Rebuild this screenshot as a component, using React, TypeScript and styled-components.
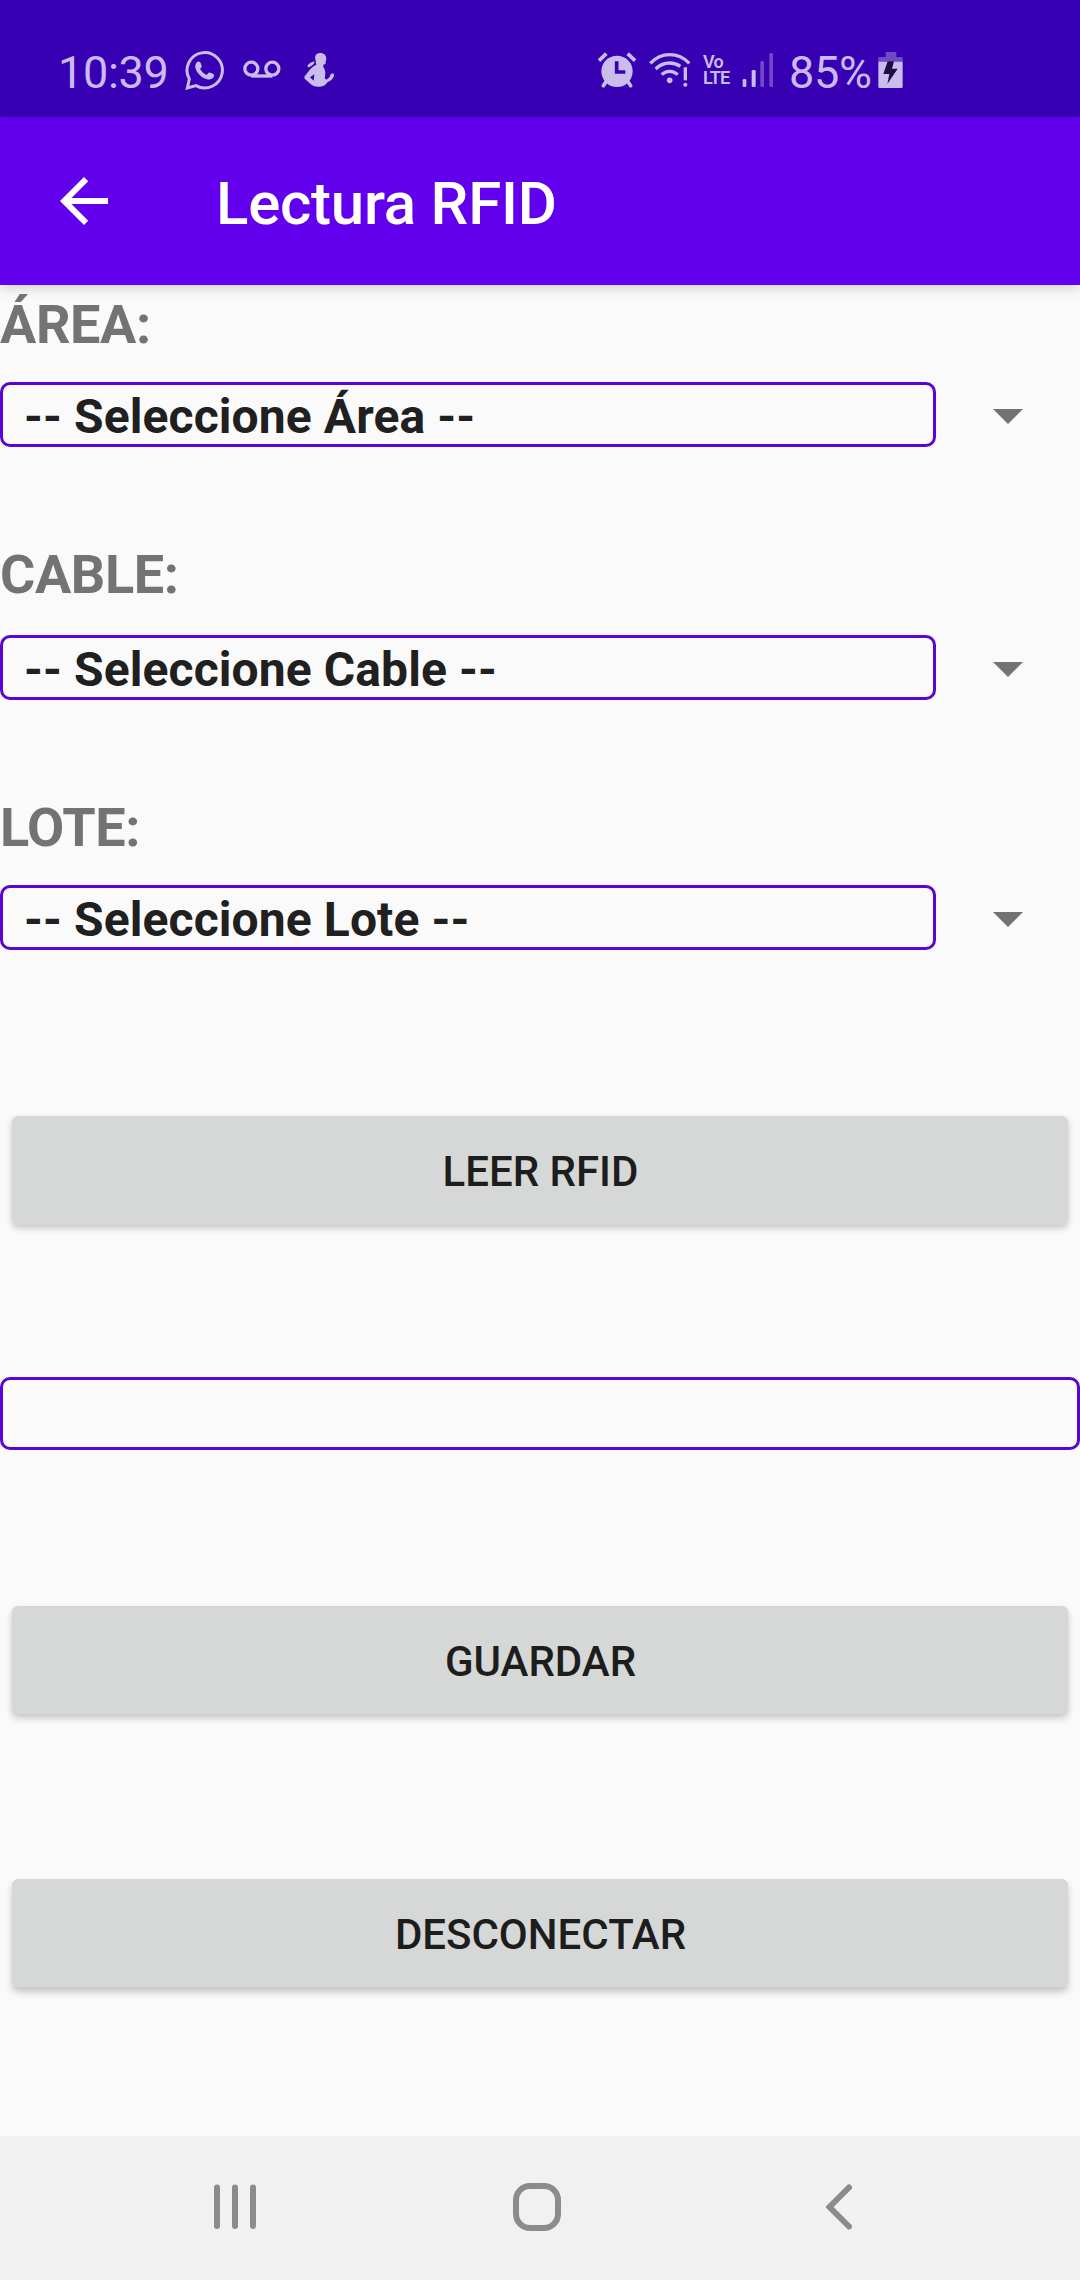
import React from "react";
import styled, { createGlobalStyle } from "styled-components";

const ICON = "#cbbdeb";
const DIM = "#7148c6";
const OUTLINE = "#5a05d2";

const GlobalStyle = createGlobalStyle`
  *, *::before, *::after { box-sizing: border-box; }
  body {
    margin: 0;
    background: #fafafa;
    font-family: Roboto, "Noto Sans", sans-serif;
  }
`;

const Screen = styled.div`
  display: flex;
  flex-direction: column;
  width: 1080px;
  height: 2280px;
  overflow: hidden;
  background: #fafafa;
`;

const StatusBar = styled.div`
  display: flex;
  justify-content: space-between;
  flex: none;
  height: 117px;
  padding: 43px 177px 0 58px;
  background: #3700b3;
`;

const StatusGroup = styled.div`
  display: flex;
  align-items: center;
  height: 54px;
`;

const StatusText = styled.span<{ $width: number; $gap?: number }>`
  width: ${(p) => p.$width}px;
  margin: 5px 0 0 ${(p) => p.$gap ?? 0}px;
  color: #cdb9f1;
  font-size: 45px;
  line-height: 54px;
  letter-spacing: -0.3px;
  white-space: nowrap;
`;

const StatusIcon = styled.svg<{ $gap: number }>`
  flex: none;
  display: block;
  margin-left: ${(p) => p.$gap}px;
`;

const VoLte = styled.div`
  width: 28px;
  margin-left: 11px;
  color: ${ICON};
  font-size: 18px;
  font-weight: 600;
  line-height: 16.5px;
  letter-spacing: -0.8px;
`;

const Toolbar = styled.header`
  display: flex;
  align-items: center;
  flex: none;
  height: 168px;
  padding-left: 48px;
  gap: 96px;
  background: #6200ee;
  box-shadow: 0 3px 12px rgba(0, 0, 0, 0.17);
`;

const Title = styled.h1`
  margin: 5px 0 0;
  color: #fff;
  font-size: 60px;
  font-weight: 500;
  line-height: 70px;
  letter-spacing: -0.25px;
`;

const Content = styled.main`
  display: flex;
  flex-direction: column;
  flex: 1;
`;

const Field = styled.section<{ $top: number; $gap: number }>`
  display: flex;
  flex-direction: column;
  gap: ${(p) => p.$gap}px;
  margin-top: ${(p) => p.$top}px;
`;

const Label = styled.label`
  color: #737373;
  font-size: 54px;
  font-weight: 700;
  line-height: 64px;
  letter-spacing: -0.4px;
`;

const Spinner = styled.div`
  display: flex;
  align-items: center;
  justify-content: space-between;
  height: 65px;
  padding-right: 56px;
`;

const SpinnerValue = styled.div`
  width: 936px;
  height: 65px;
  padding: 3px 21px 0;
  border: 3px solid ${OUTLINE};
  border-radius: 10px;
  color: #202020;
  font-size: 48px;
  font-weight: 700;
  line-height: 57px;
  letter-spacing: 0.1px;
`;

const DropArrow = styled.svg`
  display: block;
  margin-top: 4px;
`;

const TagInput = styled.input`
  width: 100%;
  height: 73px;
  margin: 152px 0 0;
  padding: 0 24px;
  border: 3px solid ${OUTLINE};
  border-radius: 10px;
  background: transparent;
  font: 700 48px Roboto, sans-serif;
  outline: none;
`;

const ActionButton = styled.button<{ $top: number; $height: number; $depth: number }>`
  height: ${(p) => p.$height}px;
  margin: ${(p) => p.$top}px 12px 0 12px;
  padding: 3px 0 0 1px;
  border: 0;
  border-radius: 6px;
  background: #d6d8d7;
  box-shadow: 0 ${(p) => p.$depth}px 7px rgba(0, 0, 0, 0.22);
  color: #1d1d1d;
  font: 500 42px/50px Roboto, sans-serif;
`;

const NavBar = styled.nav`
  display: grid;
  grid-template-columns: 299px 313px auto;
  align-items: center;
  flex: none;
  height: 144px;
  padding: 0 0 2px 214px;
  background: #f1f1f1;
`;

function WhatsappIcon() {
  return (
    <StatusIcon $gap={15} width="40" height="40" viewBox="436 61 120 120">
      <path
        d="M443 175 L449 148 A53 53 0 1 1 469 168 Z"
        fill="none"
        stroke={ICON}
        strokeWidth="9"
      />
      <path
        d="M468 103 Q472 94 480 96 Q484 98 486 109 Q487 113 481 118 Q488 130 501 136 L507 129 Q510 127 521 133 Q526 136 522 142 Q515 152 502 149 Q484 144 472 126 Q464 113 468 103Z"
        fill={ICON}
      />
    </StatusIcon>
  );
}

function VoicemailIcon() {
  return (
    <StatusIcon $gap={17} width="40" height="22" viewBox="607 88 120 66">
      <g fill="none" stroke={ICON} strokeWidth="10">
        <circle cx="635" cy="117" r="19.500" />
        <circle cx="698" cy="117" r="19.500" />
        <path d="M635 139H698" />
      </g>
    </StatusIcon>
  );
}

function FigureIcon() {
  return (
    <StatusIcon $gap={21} width="32" height="36" viewBox="791 67 96 108">
      <g fill={ICON}>
        <path d="M827 84C828 74 834 70 843 70C854 70 861 77 861 88L858 103L852 105L852 113C859 121 859 135 856 145L861 150C869 146 873 141 874 133L882 131L884 136C882 149 873 154 865 157C859 166 852 171 842 171C828 172 820 169 813 162L796 147L795 141L811 121C818 111 826 108 831 105Z" />
        <path d="M804 109Q807 101 818 97L829 95L827 101L812 112Q806 114 804 109Z" />
      </g>
      <path d="M825 134L812 143L823 153Z" fill="#3700b3" />
      <path d="M828 93L824 105L808 116" fill="none" stroke="#3700b3" strokeWidth="3" />
    </StatusIcon>
  );
}

function AlarmIcon() {
  return (
    <StatusIcon $gap={0} width="40" height="38" viewBox="51 63 120 114">
      <circle cx="111" cy="124" r="47" fill={ICON} />
      <g stroke={ICON} strokeWidth="11" fill="none">
        <path d="M57 92L79 71M165 92L143 71" />
        <path d="M78 155L70 167M144 155L152 167" strokeLinecap="round" />
      </g>
      <path d="M110 94V126H136" fill="none" stroke="#3700b3" strokeWidth="11" />
    </StatusIcon>
  );
}

function WifiIcon() {
  return (
    <StatusIcon $gap={11} width="44" height="38" viewBox="203 63 132 114">
      <g fill="none" stroke={ICON} strokeWidth="10">
        <path d="M210 100Q235 74 268 74Q302 74 327 100" />
        <path d="M226 117Q244 99 268 99Q286 99 300 109" />
        <path d="M244 134Q254 124 268 124Q282 124 292 134" />
        <path d="M315 112V151" />
      </g>
      <circle cx="268" cy="151" r="8.500" fill={ICON} />
      <circle cx="315" cy="164" r="6" fill={ICON} />
    </StatusIcon>
  );
}

function SignalIcon() {
  return (
    <StatusIcon $gap={11} width="32" height="36" viewBox="486 69 96 108">
      <rect x="488" y="150" width="11" height="24" rx="4" fill={ICON} />
      <rect x="515" y="123" width="12" height="51" rx="4" fill={ICON} />
      <rect x="541" y="96" width="11" height="78" rx="4" fill={DIM} />
      <rect x="568" y="72" width="11" height="102" rx="4" fill={DIM} />
    </StatusIcon>
  );
}

function BatteryIcon() {
  return (
    <StatusIcon $gap={0} width="25" height="38" viewBox="892 63 75 114">
      <path d="M915 81V69Q915 66 918 66H944Q947 66 947 69V81H963Q966 81 966 84V96H893V84Q893 81 896 81Z" fill={DIM} />
      <path d="M893 95H966V170Q966 174 962 174H897Q893 174 893 170Z" fill={ICON} />
      <path d="M921 94H940L934 116H951L920 162L926 132H908Z" fill="#200b45" />
    </StatusIcon>
  );
}

type SelectFieldProps = { label: string; value: string; top: number; gap: number };

function SelectField({ label, value, top, gap }: SelectFieldProps) {
  return (
    <Field $top={top} $gap={gap}>
      <Label>{label}</Label>
      <Spinner>
        <SpinnerValue>{value}</SpinnerValue>
        <DropArrow width="32" height="16" viewBox="0 0 32 16">
          <path d="M1 0H31L16 15Z" fill="#737373" />
        </DropArrow>
      </Spinner>
    </Field>
  );
}

export default function App() {
  return (
    <>
      <GlobalStyle />
      <Screen>
        <StatusBar>
          <StatusGroup>
            <StatusText $width={112}>10:39</StatusText>
            <WhatsappIcon />
            <VoicemailIcon />
            <FigureIcon />
          </StatusGroup>
          <StatusGroup>
            <AlarmIcon />
            <WifiIcon />
            <VoLte>
              Vo
              <br />
              LTE
            </VoLte>
            <SignalIcon />
            <StatusText $width={89} $gap={15}>85%</StatusText>
            <BatteryIcon />
          </StatusGroup>
        </StatusBar>

        <Toolbar>
          <svg width="72" height="72" viewBox="0 0 24 24">
            <path d="M20 11H7.830l5.590-5.590L12 4l-8 8 8 8 1.410-1.410L7.830 13H20z" fill="#fff" />
          </svg>
          <Title>Lectura RFID</Title>
        </Toolbar>

        <Content>
          <SelectField label="ÁREA:" value="-- Seleccione Área --" top={8} gap={25} />
          <SelectField label="CABLE:" value="-- Seleccione Cable --" top={96} gap={28} />
          <SelectField label="LOTE:" value="-- Seleccione Lote --" top={96} gap={25} />
          <ActionButton $top={166} $height={109} $depth={3}>LEER RFID</ActionButton>
          <TagInput aria-label="RFID" />
          <ActionButton $top={156} $height={108} $depth={4}>GUARDAR</ActionButton>
          <ActionButton $top={165} $height={108} $depth={5}>DESCONECTAR</ActionButton>
        </Content>

        <NavBar>
          <svg width="42" height="46" viewBox="0 0 42 46">
            <path d="M3 3.500V42M21 3.500V42M39 3.500V42" stroke="#8c8c8c" strokeWidth="6" strokeLinecap="round" />
          </svg>
          <svg width="48" height="48" viewBox="0 0 48 48">
            <rect x="3" y="3" width="42" height="42" rx="14" fill="none" stroke="#8c8c8c" strokeWidth="6" />
          </svg>
          <svg width="26" height="46" viewBox="0 0 26 46">
            <path d="M23 3.500L3.500 23L23 42.500" fill="none" stroke="#8c8c8c" strokeWidth="6" strokeLinecap="round" />
          </svg>
        </NavBar>
      </Screen>
    </>
  );
}
